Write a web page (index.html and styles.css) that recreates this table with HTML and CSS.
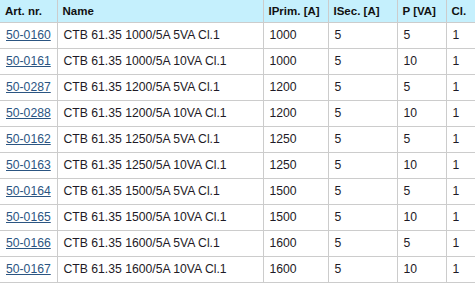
FILE: index.html
```html
<!DOCTYPE html>
<html>
<head>
<meta charset="utf-8">
<link rel="stylesheet" href="styles.css">
</head>
<body>
<table class="grid">
  <colgroup>
    <col class="c-art"><col class="c-name"><col class="c-prim"><col class="c-sec"><col class="c-p"><col class="c-cl">
  </colgroup>
  <thead>
    <tr><th>Art. nr.</th><th>Name</th><th>IPrim. [A]</th><th>ISec. [A]</th><th>P [VA]</th><th>Cl.</th></tr>
  </thead>
  <tbody>
    <tr><td><a href="#">50-0160</a></td><td>CTB 61.35 1000/5A 5VA Cl.1</td><td>1000</td><td>5</td><td>5</td><td>1</td></tr>
    <tr><td><a href="#">50-0161</a></td><td>CTB 61.35 1000/5A 10VA Cl.1</td><td>1000</td><td>5</td><td>10</td><td>1</td></tr>
    <tr><td><a href="#">50-0287</a></td><td>CTB 61.35 1200/5A 5VA Cl.1</td><td>1200</td><td>5</td><td>5</td><td>1</td></tr>
    <tr><td><a href="#">50-0288</a></td><td>CTB 61.35 1200/5A 10VA Cl.1</td><td>1200</td><td>5</td><td>10</td><td>1</td></tr>
    <tr><td><a href="#">50-0162</a></td><td>CTB 61.35 1250/5A 5VA Cl.1</td><td>1250</td><td>5</td><td>5</td><td>1</td></tr>
    <tr><td><a href="#">50-0163</a></td><td>CTB 61.35 1250/5A 10VA Cl.1</td><td>1250</td><td>5</td><td>10</td><td>1</td></tr>
    <tr><td><a href="#">50-0164</a></td><td>CTB 61.35 1500/5A 5VA Cl.1</td><td>1500</td><td>5</td><td>5</td><td>1</td></tr>
    <tr><td><a href="#">50-0165</a></td><td>CTB 61.35 1500/5A 10VA Cl.1</td><td>1500</td><td>5</td><td>10</td><td>1</td></tr>
    <tr><td><a href="#">50-0166</a></td><td>CTB 61.35 1600/5A 5VA Cl.1</td><td>1600</td><td>5</td><td>5</td><td>1</td></tr>
    <tr><td><a href="#">50-0167</a></td><td>CTB 61.35 1600/5A 10VA Cl.1</td><td>1600</td><td>5</td><td>10</td><td>1</td></tr>
  </tbody>
</table>
</body>
</html>
```
FILE: styles.css
```css
html, body {
  margin: 0;
  padding: 0;
  background: #ffffff;
}
.grid {
  border-collapse: collapse;
  table-layout: fixed;
  width: 475px;
  font-family: "Liberation Sans", Arial, sans-serif;
  color: #1e1a26;
}
.c-art { width: 57px; }
.c-name { width: 206px; }
.c-prim { width: 65px; }
.c-sec { width: 69px; }
.c-p { width: 49px; }
.c-cl { width: 29px; }
.grid th,
.grid td {
  border: 1px solid #cccccc;
  text-align: left;
  white-space: nowrap;
  overflow: hidden;
}
.grid tr > :first-child { border-left: none; }
.grid thead th {
  border-top: none;
  background: #c5f0fd;
  font-size: 11.5px;
  font-weight: bold;
  color: #111111;
  height: 22px;
  padding: 0 5px;
  line-height: 14px;
}
.grid td {
  font-size: 12.2px;
  height: 25px;
  padding: 0 6px;
  line-height: 15px;
}
.grid a {
  color: #2b5582;
  text-decoration: underline;
}
```
